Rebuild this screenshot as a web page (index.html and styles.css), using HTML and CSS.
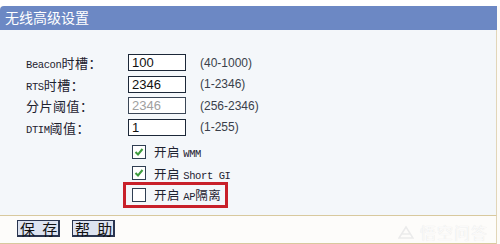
FILE: index.html
```html
<!DOCTYPE html>
<html lang="zh-CN">
<head>
  <meta charset="UTF-8" />
  <title>无线高级设置</title>
  <link rel="stylesheet" href="styles.css">
</head>
<body>
  <div class="page">
    <div class="top-strip"></div>
    <div class="title-bar">无线高级设置</div>

    <div class="content">
      <div class="form-grid">
        <label class="label"><span class="en">Beacon</span>时槽：</label>
        <input class="field" type="text" value="100">
        <span class="range">(40-1000)</span>

        <label class="label"><span class="en">RTS</span>时槽：</label>
        <input class="field" type="text" value="2346">
        <span class="range">(1-2346)</span>

        <label class="label">分片阈值：</label>
        <input class="field" type="text" value="2346" disabled>
        <span class="range">(256-2346)</span>

        <label class="label"><span class="en">DTIM</span>阈值：</label>
        <input class="field" type="text" value="1">
        <span class="range">(1-255)</span>
      </div>

      <div class="checks">
        <div class="check-row">
          <span class="box">
            <svg viewBox="0 0 12 12" width="12" height="12"><path d="M2.5 6 L5 8.5 L9.5 3" fill="none" stroke="#3d9b3d" stroke-width="2"/></svg>
          </span>
          <span class="check-text">开启 <span class="en">WMM</span></span>
        </div>
        <div class="check-row">
          <span class="box">
            <svg viewBox="0 0 12 12" width="12" height="12"><path d="M2.5 6 L5 8.5 L9.5 3" fill="none" stroke="#3d9b3d" stroke-width="2"/></svg>
          </span>
          <span class="check-text">开启 <span class="en">Short GI</span></span>
        </div>
        <div class="check-row">
          <span class="box"></span>
          <span class="check-text">开启 <span class="en">AP</span>隔离</span>
          <span class="highlight"></span>
        </div>
      </div>
    </div>

    <div class="button-bar">
      <button class="btn">保 存</button>
      <button class="btn">帮 助</button>
      <span class="watermark">
        <svg viewBox="0 0 16 14" width="16" height="14"><path d="M1 13 L8 2 L15 13 Z M4 9 H12" fill="none" stroke="#ebebeb" stroke-width="1.5"/></svg>
        悟空问答
      </span>
    </div>
  </div>
</body>
</html>
```

FILE: styles.css
```css
body {
  margin: 0;
  padding: 0;
  background: #fdfbf7;
  font-family: "Noto Sans CJK SC", sans-serif;
  font-size: 12px;
  color: #1e2230;
}

.page {
  width: 500px;
  height: 244px;
  display: flex;
  flex-direction: column;
  overflow: hidden;
}

.top-strip {
  height: 6px;
  background: #ffffff;
}

.title-bar {
  height: 24px;
  margin-right: 3px;
  padding-left: 5px;
  background: #6c88c4;
  border-radius: 4px 0 0 0;
  color: #ffffff;
  font-size: 14px;
  line-height: 23px;
}

.content {
  height: 185px;
  box-sizing: border-box;
  margin-right: 3px;
  padding-top: 22px;
  background: #f4f7fa;
  border-right: 1px solid #e2d6b8;
}

.form-grid {
  display: grid;
  grid-template-columns: 102px 72px auto;
  grid-auto-rows: 21.5px;
  align-items: center;
  padding-left: 26px;
}

.label {
  font-size: 13px;
  letter-spacing: 0.5px;
}

.en {
  font-family: "Liberation Mono", monospace;
  font-size: 10.5px;
  letter-spacing: -0.4px;
}

.field {
  width: 58px;
  height: 17px;
  box-sizing: border-box;
  margin: 0;
  padding: 0 3px;
  border: 1px solid #1c2838;
  background: #ffffff;
  font-family: "Liberation Sans", sans-serif;
  font-size: 13px;
  color: #111;
}

.field:disabled {
  color: #a0a0a0;
  border-color: #3a4656;
}

.range {
  font-family: "Liberation Sans", sans-serif;
  font-size: 12px;
  color: #3a3f4a;
}

.checks {
  margin-top: 3px;
  padding-left: 132px;
}

.check-row {
  position: relative;
  height: 21.5px;
  display: flex;
  align-items: center;
  gap: 8px;
}

.box {
  width: 12px;
  height: 12px;
  border: 1px solid #2f3e52;
  background: #ffffff;
  display: flex;
}

.check-text {
  font-size: 12.5px;
  letter-spacing: 0.5px;
}

.highlight {
  position: absolute;
  left: -9px;
  top: -2px;
  width: 105px;
  height: 26px;
  box-sizing: border-box;
  border: 3px solid #c8202a;
}

.button-bar {
  flex: 1;
  margin-right: 3px;
  display: flex;
  align-items: flex-start;
  gap: 12px;
  padding: 4px 0 0 17px;
  border-top: 1px solid #d8c99e;
  border-bottom: 1px solid #d8c99e;
  border-right: 1px solid #e2d6b8;
  background: #fdfcfa;
  position: relative;
}

.btn {
  width: 43px;
  height: 17px;
  margin: 0;
  padding: 0 0 0 2px;
  background: #dde3f0;
  border: 1px solid #2a3550;
  border-right-width: 2px;
  border-bottom-width: 2px;
  font-family: "Noto Sans CJK SC", sans-serif;
  font-size: 15px;
  line-height: 13px;
  letter-spacing: 2px;
  white-space: nowrap;
  color: #111;
}

.watermark {
  position: absolute;
  right: 8px;
  top: 4px;
  display: flex;
  align-items: center;
  gap: 6px;
  font-size: 16px;
  color: #fafafa;
  text-shadow: 0 0 1px #e0e0e0;
  letter-spacing: 1px;
}
```
